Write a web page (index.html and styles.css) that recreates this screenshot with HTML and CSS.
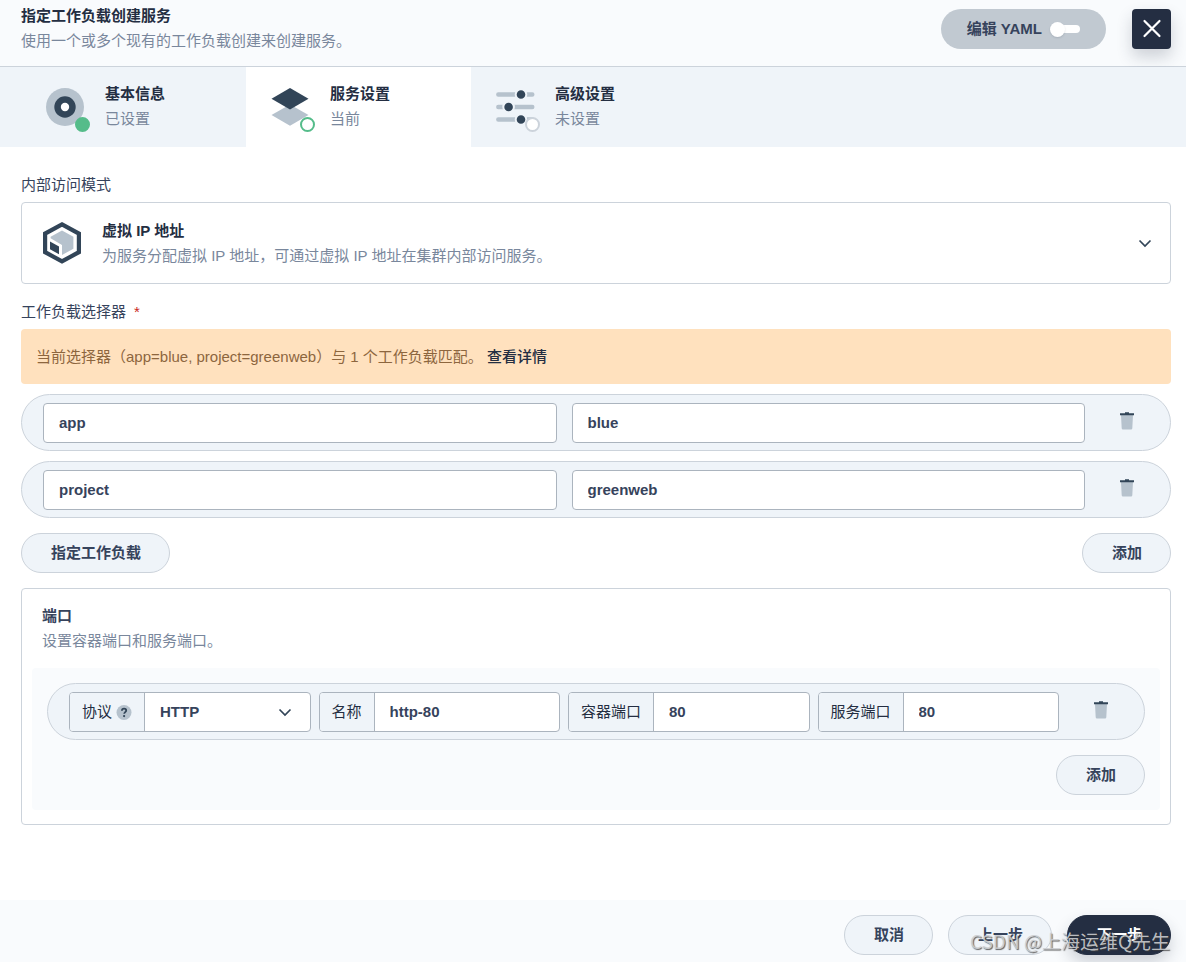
FILE: index.html
```html
<!DOCTYPE html>
<html lang="zh-CN">
<head>
<meta charset="utf-8">
<meta name="viewport" content="width=device-width, initial-scale=1">
<title>指定工作负载创建服务</title>
<link rel="stylesheet" href="styles.css">
</head>
<body>
<svg class="sprite" aria-hidden="true">
  <symbol id="trash" viewBox="0 0 20 20">
    <path d="M4 4h12l-.7 13.200a1.300 1.300 0 0 1-1.300 1.300H6a1.300 1.300 0 0 1-1.300-1.300z" fill="#b6c2cd"/>
    <path d="M3 2.200h5V1.300h4v.9h5v2H3z" fill="#324558"/>
  </symbol>
  <symbol id="chevron" viewBox="0 0 20 20">
    <path d="M4.500 7.500L10 13l5.500-5.500" fill="none" stroke="#324558" stroke-width="1.700"/>
  </symbol>
</svg>

<header class="header">
  <div>
    <h1 class="title">指定工作负载创建服务</h1>
    <p class="desc">使用一个或多个现有的工作负载创建来创建服务。</p>
  </div>
  <div class="header-actions">
    <button class="yaml" type="button" role="switch" aria-checked="false">编辑 YAML<span class="switch"></span></button>
    <button class="close" type="button" aria-label="关闭">
      <svg width="20" height="20" viewBox="0 0 20 20"><path d="M2.500 2l15 15M17.500 2l-15 15" stroke="#fff" stroke-width="2.200" stroke-linecap="round"/></svg>
    </button>
  </div>
</header>

<nav class="steps">
  <div class="step">
    <span class="step-icon">
      <svg width="40" height="40" viewBox="0 0 40 40"><circle cx="20" cy="20" r="19" fill="#b6c2cd"/><circle cx="20" cy="20" r="10.700" fill="#324558"/><circle cx="20" cy="20" r="4.200" fill="#fff"/></svg>
      <span class="state done"></span>
    </span>
    <div class="step-text"><div class="title">基本信息</div><div class="desc">已设置</div></div>
  </div>
  <div class="step active" aria-current="step">
    <span class="step-icon">
      <svg width="40" height="40" viewBox="0 0 40 40"><path d="M20 17.500L38.500 28 20 38.700 1.500 28z" fill="#b6c2cd"/><path d="M20 1l18.500 10.800L20 22.500 1.500 11.800z" fill="#324558"/></svg>
      <span class="state current"></span>
    </span>
    <div class="step-text"><div class="title">服务设置</div><div class="desc">当前</div></div>
  </div>
  <div class="step">
    <span class="step-icon">
      <svg width="40" height="40" viewBox="0 0 40 40">
        <path d="M3.300 7.500h34M3.300 20h34M3.300 32.500h34" stroke="#b6c2cd" stroke-width="4.400" stroke-linecap="round"/>
        <g fill="#324558" stroke="#eff4f9" stroke-width="2"><circle cx="26" cy="7.500" r="5.300"/><circle cx="13.600" cy="20" r="5.300"/><circle cx="26" cy="32.500" r="5.300"/></g>
      </svg>
      <span class="state"></span>
    </span>
    <div class="step-text"><div class="title">高级设置</div><div class="desc">未设置</div></div>
  </div>
</nav>

<main class="content">
  <div class="label" id="mode-label">内部访问模式</div>
  <button class="mode" type="button" aria-haspopup="listbox" aria-labelledby="mode-label mode-name">
    <svg width="40" height="42" viewBox="0 0 40 42">
      <path d="M20 2.400l16.900 9.200v18.600L20 39.400 3.100 30.200V11.600z" fill="#fff" stroke="#324558" stroke-width="4.200"/>
      <path d="M20 8.600l11.400 6.200v11.900L20 33V23L8.600 16.200v-1.400z" fill="#b6c2cd"/>
      <path d="M8 19.600l9 5v7.600l-9-5z" fill="#324558"/>
    </svg>
    <span class="mode-text">
      <span class="title" id="mode-name">虚拟 IP 地址</span>
      <span class="desc">为服务分配虚拟 IP 地址，可通过虚拟 IP 地址在集群内部访问服务。</span>
    </span>
    <svg width="20" height="20"><use href="#chevron"/></svg>
  </button>

  <div class="label">工作负载选择器<span class="required">*</span></div>
  <div class="alert">当前选择器（app=blue, project=greenweb）与 1 个工作负载匹配。 <a href="#details">查看详情</a></div>

  <div class="rows">
    <div class="row pairs">
      <input class="field" type="text" value="app" aria-label="键">
      <input class="field" type="text" value="blue" aria-label="值">
      <button class="delete" type="button" aria-label="删除"><svg width="20" height="20"><use href="#trash"/></svg></button>
    </div>
    <div class="row pairs">
      <input class="field" type="text" value="project" aria-label="键">
      <input class="field" type="text" value="greenweb" aria-label="值">
      <button class="delete" type="button" aria-label="删除"><svg width="20" height="20"><use href="#trash"/></svg></button>
    </div>
  </div>
  <div class="row-actions">
    <button class="btn" type="button">指定工作负载</button>
    <button class="btn" type="button">添加</button>
  </div>

  <section class="ports" id="details">
    <div class="ports-head">
      <h2 class="title">端口</h2>
      <p class="desc">设置容器端口和服务端口。</p>
    </div>
    <div class="ports-body">
      <div class="row port">
        <div class="group">
          <label for="protocol">协议
            <svg width="16" height="16" viewBox="0 0 16 16" aria-hidden="true"><circle cx="8" cy="8.500" r="7.500" fill="#b6c2cd"/><path d="M5.900 6.800c0-1.400.9-2.100 2.200-2.100s2.100.7 2.100 1.900c0 1.500-2 1.600-2 3.200" fill="none" stroke="#324558" stroke-width="1.800"/><circle cx="8.100" cy="12.100" r="1.100" fill="#324558"/></svg>
          </label>
          <select id="protocol"><option>HTTP</option></select>
          <svg class="arrow" width="20" height="20" aria-hidden="true"><use href="#chevron"/></svg>
        </div>
        <div class="group"><label for="name">名称</label><input id="name" type="text" value="http-80"></div>
        <div class="group"><label for="cport">容器端口</label><input id="cport" type="text" value="80"></div>
        <div class="group"><label for="sport">服务端口</label><input id="sport" type="text" value="80"></div>
        <button class="delete" type="button" aria-label="删除"><svg width="20" height="20"><use href="#trash"/></svg></button>
      </div>
      <div class="ports-add"><button class="btn" type="button">添加</button></div>
    </div>
  </section>
</main>

<footer class="footer">
  <button class="btn" type="button">取消</button>
  <button class="btn" type="button">上一步</button>
  <button class="btn primary" type="button">下一步</button>
  <span class="watermark">CSDN @上海运维Q先生</span>
</footer>
</body>
</html>
```
FILE: styles.css
```css
* { box-sizing: border-box; }

body {
  margin: 0;
  min-height: 100vh;
  display: flex;
  flex-direction: column;
  background: #fff;
  color: #36435c;
  font: 15px/20px "Liberation Sans", "Noto Sans CJK SC", sans-serif;
}

button, input, select { font: inherit; color: inherit; }
button { padding: 0; border: 0; background: none; cursor: pointer; }
svg { display: block; flex: none; }
.sprite { position: absolute; width: 0; height: 0; }

.title {
  display: block;
  margin: 0 0 5px;
  font-size: 15px;
  font-weight: 700;
  color: #242e42;
}
.desc { display: block; margin: 0; color: #79879c; }

.header {
  display: flex;
  justify-content: space-between;
  padding: 6px 15px 15px 21px;
  border-bottom: 1px solid #ccd3db;
  background: #f9fbfd;
}
.header-actions { display: flex; gap: 26px; padding-top: 3px; }
.header-actions button { height: 40px; }
.yaml {
  display: flex;
  align-items: center;
  gap: 8px;
  padding: 0 26px;
  border-radius: 20px;
  background: #c1c9d1;
  font-weight: 700;
}
.switch {
  display: flex;
  align-items: center;
  width: 30px;
  height: 8px;
  border-radius: 4px;
  background: linear-gradient(90deg, transparent 8px, #fff 8px);
}
.switch::before {
  content: "";
  width: 15px;
  height: 15px;
  flex: none;
  border-radius: 50%;
  background: #fff;
  box-shadow: 0 1px 2px rgba(36, 46, 66, .15);
}
.close {
  display: grid;
  place-items: center;
  width: 39px;
  border-radius: 4px;
  background: #242e42;
  box-shadow: 0 8px 16px rgba(36, 46, 66, .2);
}

.steps { display: flex; padding-left: 21px; background: #eff4f9; }
.step {
  display: flex;
  align-items: center;
  gap: 20px;
  width: 225px;
  height: 80px;
  padding: 0 24px;
}
.step.active { background: #fff; }
.step-icon { position: relative; }
.step-text { padding-bottom: 2px; }
.state {
  position: absolute;
  right: -5px;
  bottom: -5px;
  width: 15px;
  height: 15px;
  border: 2px solid #ccd3db;
  border-radius: 50%;
  background: #fff;
}
.state.current { border-color: #55bc8a; }
.state.done { border-color: #55bc8a; background: #55bc8a; }

.content { padding: 28px 15px 75px 21px; }
.label { margin-bottom: 7px; }
.required { margin-left: 8px; color: #ca2621; }

.mode {
  display: flex;
  align-items: center;
  width: 100%;
  height: 82px;
  margin-bottom: 18px;
  padding: 0 15px 0 20px;
  border: 1px solid #ccd3db;
  border-radius: 4px;
  background: #fff;
  text-align: left;
}
.mode-text { flex: 1; padding-left: 20px; }

.alert {
  margin-bottom: 10px;
  padding: 18px 15px 17px;
  border-radius: 4px;
  background: #ffe1be;
  color: #8d663e;
}
.alert a { color: #242e42; font-weight: 500; text-decoration: none; }

.rows { display: grid; gap: 10px; }
.row {
  display: flex;
  padding: 8px 0 7px 21px;
  border: 1px solid #ccd3db;
  border-radius: 29px;
  background: #eff4f9;
}
.pairs { gap: 15px; }
.pairs .delete { margin-left: -15px; }
.port { gap: 8px; }
.port .delete { margin-left: -8px; }
.field, .group {
  flex: 1;
  min-width: 0;
  height: 40px;
  border: 1px solid #abb4be;
  border-radius: 4px;
  background: #fff;
}
.field { padding: 0 15px 1px; font-weight: 700; }
.delete { display: flex; justify-content: center; width: 85px; padding: 8px 1px 0 0; }

.row-actions { display: flex; justify-content: space-between; margin: 15px 0; }
.btn {
  height: 40px;
  padding: 0 28px 0 29px;
  border: 1px solid #ccd3db;
  border-radius: 20px;
  background: #eff4f9;
  font-weight: 700;
}
.primary {
  border-color: #242e42;
  background: #242e42;
  color: #fff;
  box-shadow: 0 8px 16px rgba(36, 46, 66, .2);
}

.ports { padding: 17px 10px 14px; border: 1px solid #ccd3db; border-radius: 4px; }
.ports-head { padding: 0 10px 17px; }
.ports-head .title { color: #36435c; }
.ports-body { padding: 15px; border-radius: 4px; background: #f9fbfd; }
.ports-add { display: flex; justify-content: flex-end; margin-top: 15px; }

.group { position: relative; display: flex; overflow: hidden; }
.group label {
  display: flex;
  align-items: center;
  gap: 4px;
  padding: 0 12px;
  border-right: 1px solid #abb4be;
  background: #eff4f9;
  color: #242e42;
  white-space: nowrap;
}
.group input, .group select {
  flex: 1;
  min-width: 0;
  padding: 0 15px;
  border: 0;
  background: none;
  font-weight: 700;
  appearance: none;
}
.arrow { position: absolute; right: 15px; top: 9px; pointer-events: none; }

.footer {
  position: relative;
  display: flex;
  justify-content: flex-end;
  gap: 15px;
  margin-top: auto;
  padding: 15px 15px 7px;
  background: #f9fbfd;
}
.watermark {
  position: absolute;
  right: 16px;
  bottom: 11px;
  font: 19px/20px "Noto Sans CJK SC", sans-serif;
  color: rgba(205, 207, 210, .9);
  text-shadow: 1px 1px 1px rgba(60, 60, 60, .8);
  pointer-events: none;
}
```
